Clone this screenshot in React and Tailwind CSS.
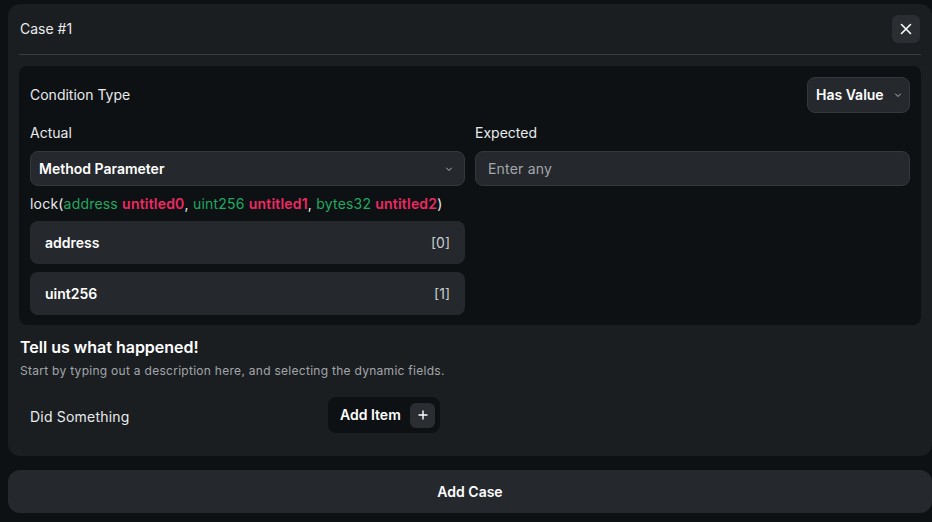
import React from "react";

function Chevron({ className = "" }) {
  return (
    <svg width="10" height="10" viewBox="0 0 10 10" className={className} fill="none">
      <path d="M2.5 4 L5 6.5 L7.5 4" stroke="currentColor" strokeWidth="1" strokeLinecap="round" strokeLinejoin="round" />
    </svg>
  );
}

export default function App() {
  return (
    <div
      className="min-h-[522px] w-[932px] overflow-hidden bg-[#0d1114] pl-2 pt-1 text-[#e9eaeb]"
      style={{ fontFamily: "Inter, 'Noto Sans', sans-serif" }}
    >
      <div className="w-[924px] rounded-xl bg-[#1b1e21] px-[11px] pt-[11px] pb-[23px]">
        {/* header */}
        <div className="flex h-7 items-center justify-between">
          <span className="pl-px text-sm">Case #1</span>
          <button className="mr-px flex h-7 w-7 items-center justify-center rounded-md bg-[#2a2e32] text-white">
            <svg width="12" height="12" viewBox="0 0 12 12" fill="none">
              <path d="M1.5 1.5 L10.5 10.5 M10.5 1.5 L1.5 10.5" stroke="currentColor" strokeWidth="1.6" strokeLinecap="round" />
            </svg>
          </button>
        </div>
        <div className="mt-[11px] h-px bg-[#393c40]" />

        {/* inner panel */}
        <div className="mt-[11px] rounded-lg bg-[#0d1114] px-[11px] pt-[11px] pb-[10px]">
          <div className="flex h-9 items-center justify-between">
            <span className="text-sm">Condition Type</span>
            <button className="flex h-9 w-[103px] items-center gap-[9px] rounded-lg border border-[#34383d] bg-[#25292d] pl-[8px] text-sm font-semibold text-white">
              Has Value
              <Chevron className="text-[#b8bcc0]" />
            </button>
          </div>

          <div className="mt-[10px] grid grid-cols-2 gap-[10px]">
            <div className="flex flex-col">
              <span className="h-5 text-sm leading-5">Actual</span>
              <div className="mt-2 flex h-[35px] items-center justify-between rounded-lg border border-[#34383d] bg-[#25292d] pl-2 pr-[10px] text-sm font-semibold text-white">
                Method Parameter
                <Chevron className="text-[#b8bcc0]" />
              </div>
              <div className="mt-2 h-5 text-sm leading-5 tracking-[0.2px] text-[#e9eaeb]">
                lock(
                <span className="text-[#22a861]">address </span>
                <span className="font-semibold text-[#ee2a62]">untitled0</span>,{" "}
                <span className="text-[#22a861]">uint256 </span>
                <span className="font-semibold text-[#ee2a62]">untitled1</span>,{" "}
                <span className="text-[#22a861]">bytes32 </span>
                <span className="font-semibold text-[#ee2a62]">untitled2</span>)
              </div>
              <div className="mt-[7px] flex flex-col gap-[8px]">
                <div className="flex h-[43px] items-center justify-between rounded-lg bg-[#25292d] px-[15px] text-sm">
                  <span className="font-semibold text-white">address</span>
                  <span className="text-[#c9ccd0]">[0]</span>
                </div>
                <div className="flex h-[43px] items-center justify-between rounded-lg bg-[#25292d] px-[15px] text-sm">
                  <span className="font-semibold text-white">uint256</span>
                  <span className="text-[#c9ccd0]">[1]</span>
                </div>
              </div>
            </div>
            <div className="flex flex-col">
              <span className="h-5 text-sm leading-5">Expected</span>
              <div className="mt-2 flex h-[35px] items-center rounded-lg border border-[#34383d] bg-[#25292d] px-3 text-sm tracking-[0.2px] text-[#a3a7ac]">
                Enter any
              </div>
            </div>
          </div>
        </div>

        {/* description */}
        <div className="mt-[10px] pl-px">
          <div className="text-base font-semibold leading-6 text-white">Tell us what happened!</div>
          <div className="mt-[4px] text-xs leading-4 tracking-[0.28px] text-[#a2a6ab]">
            Start by typing out a description here, and selecting the dynamic fields.
          </div>
        </div>

        <div className="mt-[18px] flex h-9 items-center pl-[11px]">
          <span className="mt-[3px] w-[298px] text-sm tracking-[0.2px]">Did Something</span>
          <button className="flex h-9 w-[112px] items-center justify-between rounded-lg bg-[#0d1114] pl-3 pr-[5px] text-sm font-semibold text-white">
            Add Item
            <span className="flex h-[25px] w-[25px] items-center justify-center rounded-md bg-[#2a2e32]">
              <svg width="10" height="10" viewBox="0 0 10 10" fill="none">
                <path d="M5 1 V9 M1 5 H9" stroke="currentColor" strokeWidth="1.4" strokeLinecap="round" />
              </svg>
            </span>
          </button>
        </div>
      </div>

      <button className="mt-[14px] flex h-[43px] w-[924px] items-center justify-center rounded-xl bg-[#25292d] text-sm font-semibold text-white">
        Add Case
      </button>
    </div>
  );
}
